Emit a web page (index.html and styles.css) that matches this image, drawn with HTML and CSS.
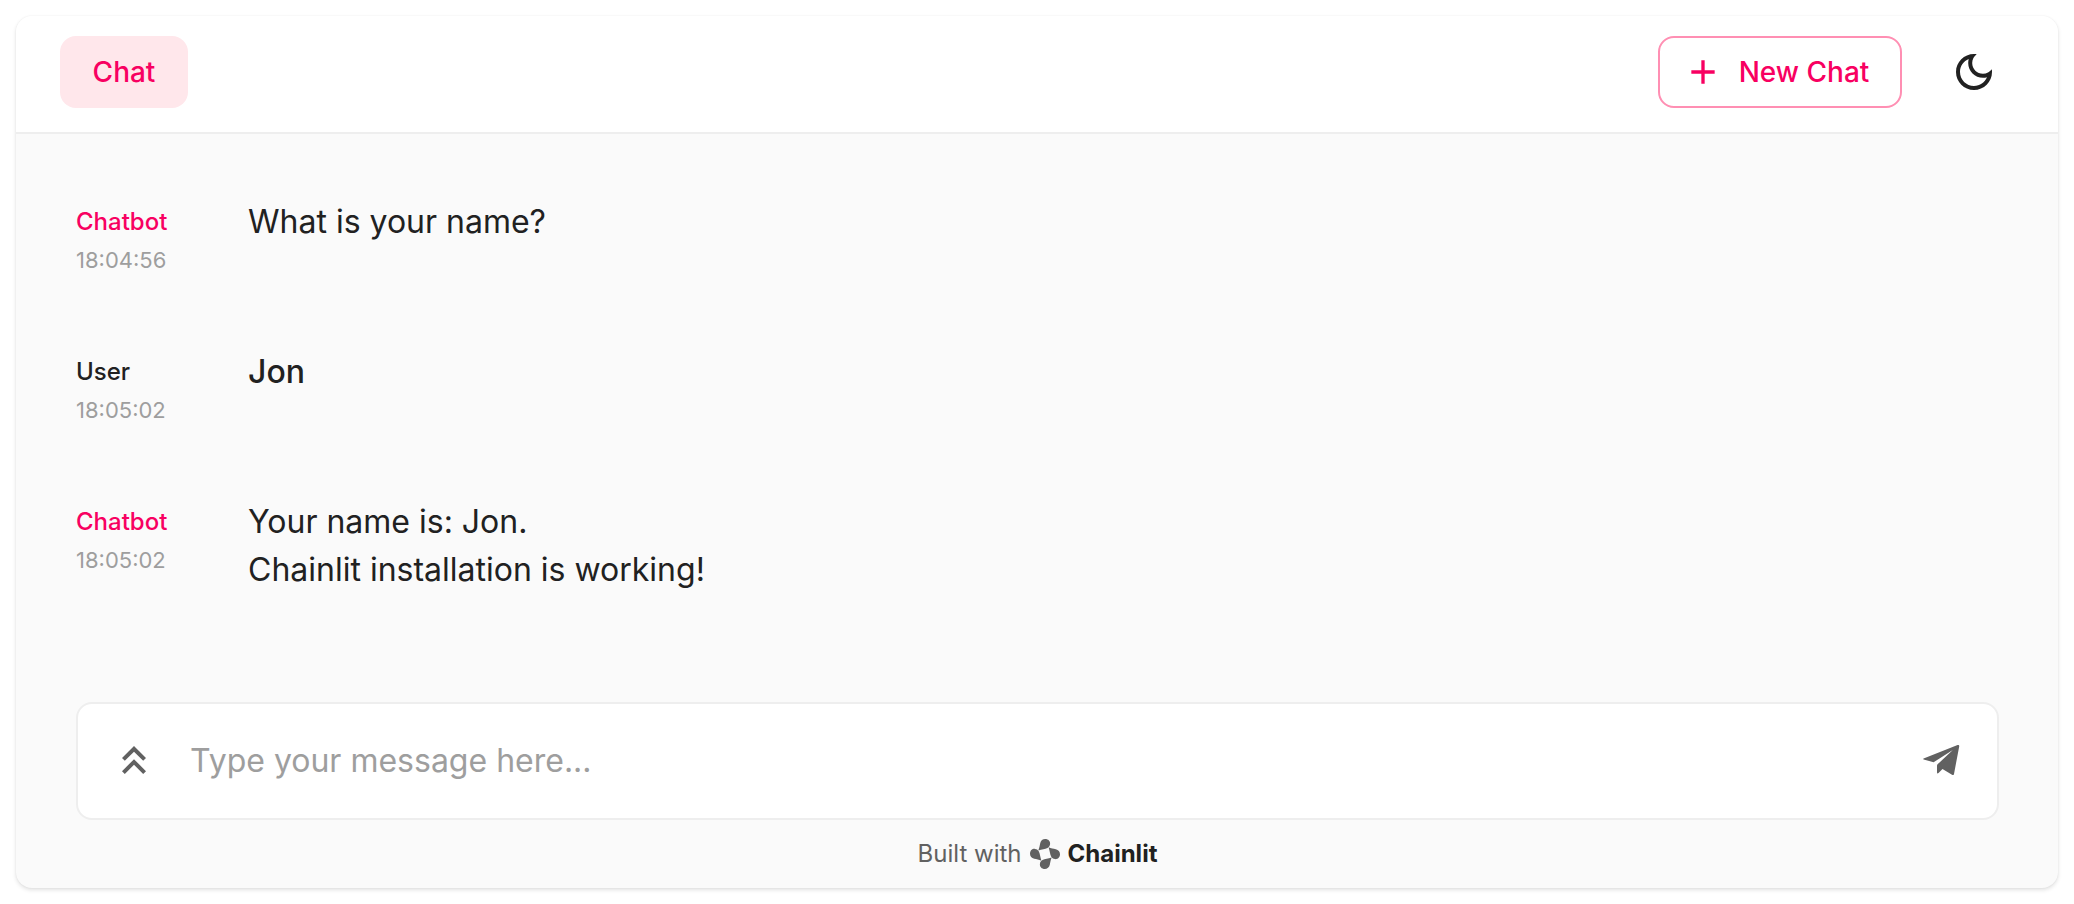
FILE: index.html
```html
<!DOCTYPE html>
<html lang="en">
<head>
<meta charset="utf-8">
<title>Chat</title>
<link rel="stylesheet" href="styles.css">
</head>
<body>
<div class="app">
  <header class="header">
    <nav><a class="tab" href="#chat">Chat</a></nav>
    <div class="actions">
      <button class="new-chat" type="button">
        <svg class="plus" viewBox="0 0 24 24" aria-hidden="true"><path d="M19 13h-6v6h-2v-6H5v-2h6V5h2v6h6z"/></svg>
        New Chat
      </button>
      <button class="icon-button theme" type="button" aria-label="Toggle dark mode">
        <svg class="icon" viewBox="0 0 24 24" aria-hidden="true"><path d="M9.37 5.51c-.18.64-.27 1.31-.27 1.99 0 4.08 3.32 7.4 7.4 7.4.68 0 1.35-.09 1.99-.27C17.45 17.19 14.93 19 12 19c-3.86 0-7-3.14-7-7 0-2.93 1.81-5.45 4.37-6.49zM12 3c-4.97 0-9 4.03-9 9s4.03 9 9 9 9-4.03 9-9c0-.46-.04-.92-.1-1.36-.98 1.37-2.58 2.26-4.4 2.26-2.98 0-5.4-2.42-5.4-5.4 0-1.81.89-3.42 2.26-4.4-.44-.06-.9-.1-1.36-.1z"/></svg>
      </button>
    </div>
  </header>
  <main class="main">
    <section class="messages" aria-label="Conversation">
      <article class="message">
        <div class="meta"><span class="author bot">Chatbot</span><time class="time">18:04:56</time></div>
        <p class="text">What is your name?</p>
      </article>
      <article class="message">
        <div class="meta"><span class="author">User</span><time class="time">18:05:02</time></div>
        <p class="text strong">Jon</p>
      </article>
      <article class="message">
        <div class="meta"><span class="author bot">Chatbot</span><time class="time">18:05:02</time></div>
        <p class="text">Your name is: Jon.<br>Chainlit installation is working!</p>
      </article>
    </section>
    <form class="composer">
      <button class="icon-button" type="button" aria-label="Show history">
        <svg class="icon" viewBox="0 0 24 24" aria-hidden="true"><path d="M6 17.59 7.41 19 12 14.42 16.59 19 18 17.59l-6-6z"/><path d="m6 11 1.41 1.41L12 7.83l4.59 4.58L18 11l-6-6z"/></svg>
      </button>
      <input class="field" type="text" aria-label="Message" placeholder="Type your message here...">
      <button class="icon-button" type="submit" aria-label="Send message">
        <svg class="icon" viewBox="0 0 48 48" aria-hidden="true"><path d="M6.6 22.4 40.6 9.1q1.9-.5 1.600 1.3L37 37.900q-.5 1.800-2 .9L25.500 33l-4 4q-1.500 1.100-1.500-.8v-6.400q0-1 .8-1.700L35.800 14 16.600 26.200 6.700 23.600q-1-.6-.1-1.200z"/></svg>
      </button>
    </form>
    <footer class="footer">
      <span>Built with</span>
      <a class="brand" href="#chainlit">
        <svg class="logo" viewBox="0 0 30 30" aria-hidden="true">
          <path id="petal" d="M10.200 4.200C10.700 1.600 12.800 0 15.200 0c3.100 0 5.200 2.300 4.900 5-.2 1.900-1.200 3.200-2.600 3.900C15 10.100 12 10.200 8.300 11.400c1.100-2.500 1.400-4.800 1.900-7.200z"/>
          <use href="#petal" transform="rotate(90 15 15)"/><use href="#petal" transform="rotate(180 15 15)"/><use href="#petal" transform="rotate(270 15 15)"/>
        </svg>
        Chainlit
      </a>
    </footer>
  </main>
</div>
</body>
</html>
```
FILE: styles.css
```css
* { box-sizing: border-box; }

body {
  margin: 0;
  padding: 16px;
  background: #fff;
  color: #212121;
  font-family: Inter, "Liberation Sans", sans-serif;
}

button {
  border: 0;
  background: none;
  font: inherit;
  cursor: pointer;
}

.app {
  display: flex;
  flex-direction: column;
  min-height: calc(100vh - 32px);
  border-radius: 16px;
  background: #fafafa;
  box-shadow: 0 2px 4px rgba(0, 0, 0, 0.12), 0 0 2px rgba(0, 0, 0, 0.06);
  overflow: hidden;
}

.header {
  display: flex;
  justify-content: space-between;
  align-items: center;
  padding: 20px 60px 24px 44px;
  border-bottom: 2px solid #eee;
  background: #fff;
}

.tab,
.new-chat {
  display: flex;
  justify-content: center;
  align-items: center;
  height: 72px;
  border-radius: 16px;
  color: #f80061;
  font-size: 28px;
  font-weight: 500;
  text-decoration: none;
}

.tab {
  min-width: 128px;
  padding: 0 32px;
  background: #ffe7eb;
}

.actions {
  display: flex;
  align-items: center;
  gap: 48px;
}

.new-chat {
  gap: 16px;
  min-width: 244px;
  padding: 0 30px 0 22px;
  border: 2px solid #ff8fb3;
}

.plus {
  width: 40px;
  height: 40px;
  fill: currentColor;
}

.icon-button {
  display: flex;
  padding: 0;
  color: #616161;
}

.theme { color: #212121; }

.icon {
  width: 48px;
  height: 48px;
  fill: currentColor;
}

.main {
  display: flex;
  flex: 1;
  flex-direction: column;
  padding: 0 59px 16px 60px;
}

.messages {
  flex: 1;
  padding-top: 64px;
}

.message {
  display: flex;
  min-height: 102px;
  margin-bottom: 48px;
}

.meta {
  display: flex;
  flex-direction: column;
  width: 172px;
  padding-top: 4px;
}

.author {
  font-size: 24px;
  font-weight: 500;
  line-height: 40px;
}

.bot { color: #f80061; }

.time {
  color: #9e9e9e;
  font-size: 22px;
  line-height: 36px;
}

.text {
  flex: 1;
  margin: 0;
  font-size: 32px;
  line-height: 48px;
}

.strong { font-weight: 500; }

.composer {
  display: flex;
  align-items: center;
  gap: 32px;
  height: 118px;
  padding: 0 32px 2px;
  border: 2px solid #eee;
  border-radius: 16px;
  background: #fff;
}

.field {
  flex: 1;
  min-width: 0;
  padding: 0;
  border: 0;
  outline: 0;
  background: none;
  color: #212121;
  font: inherit;
  font-size: 32px;
}

.field::placeholder { color: #9e9e9e; }

.footer {
  display: flex;
  justify-content: center;
  align-items: center;
  gap: 8px;
  padding-top: 16px;
  color: #616161;
  font-size: 24px;
  line-height: 36px;
}

.brand {
  display: flex;
  align-items: center;
  gap: 8px;
  color: #212121;
  font-weight: 700;
  text-decoration: none;
}

.logo {
  width: 30px;
  height: 30px;
  fill: #616161;
}
```
